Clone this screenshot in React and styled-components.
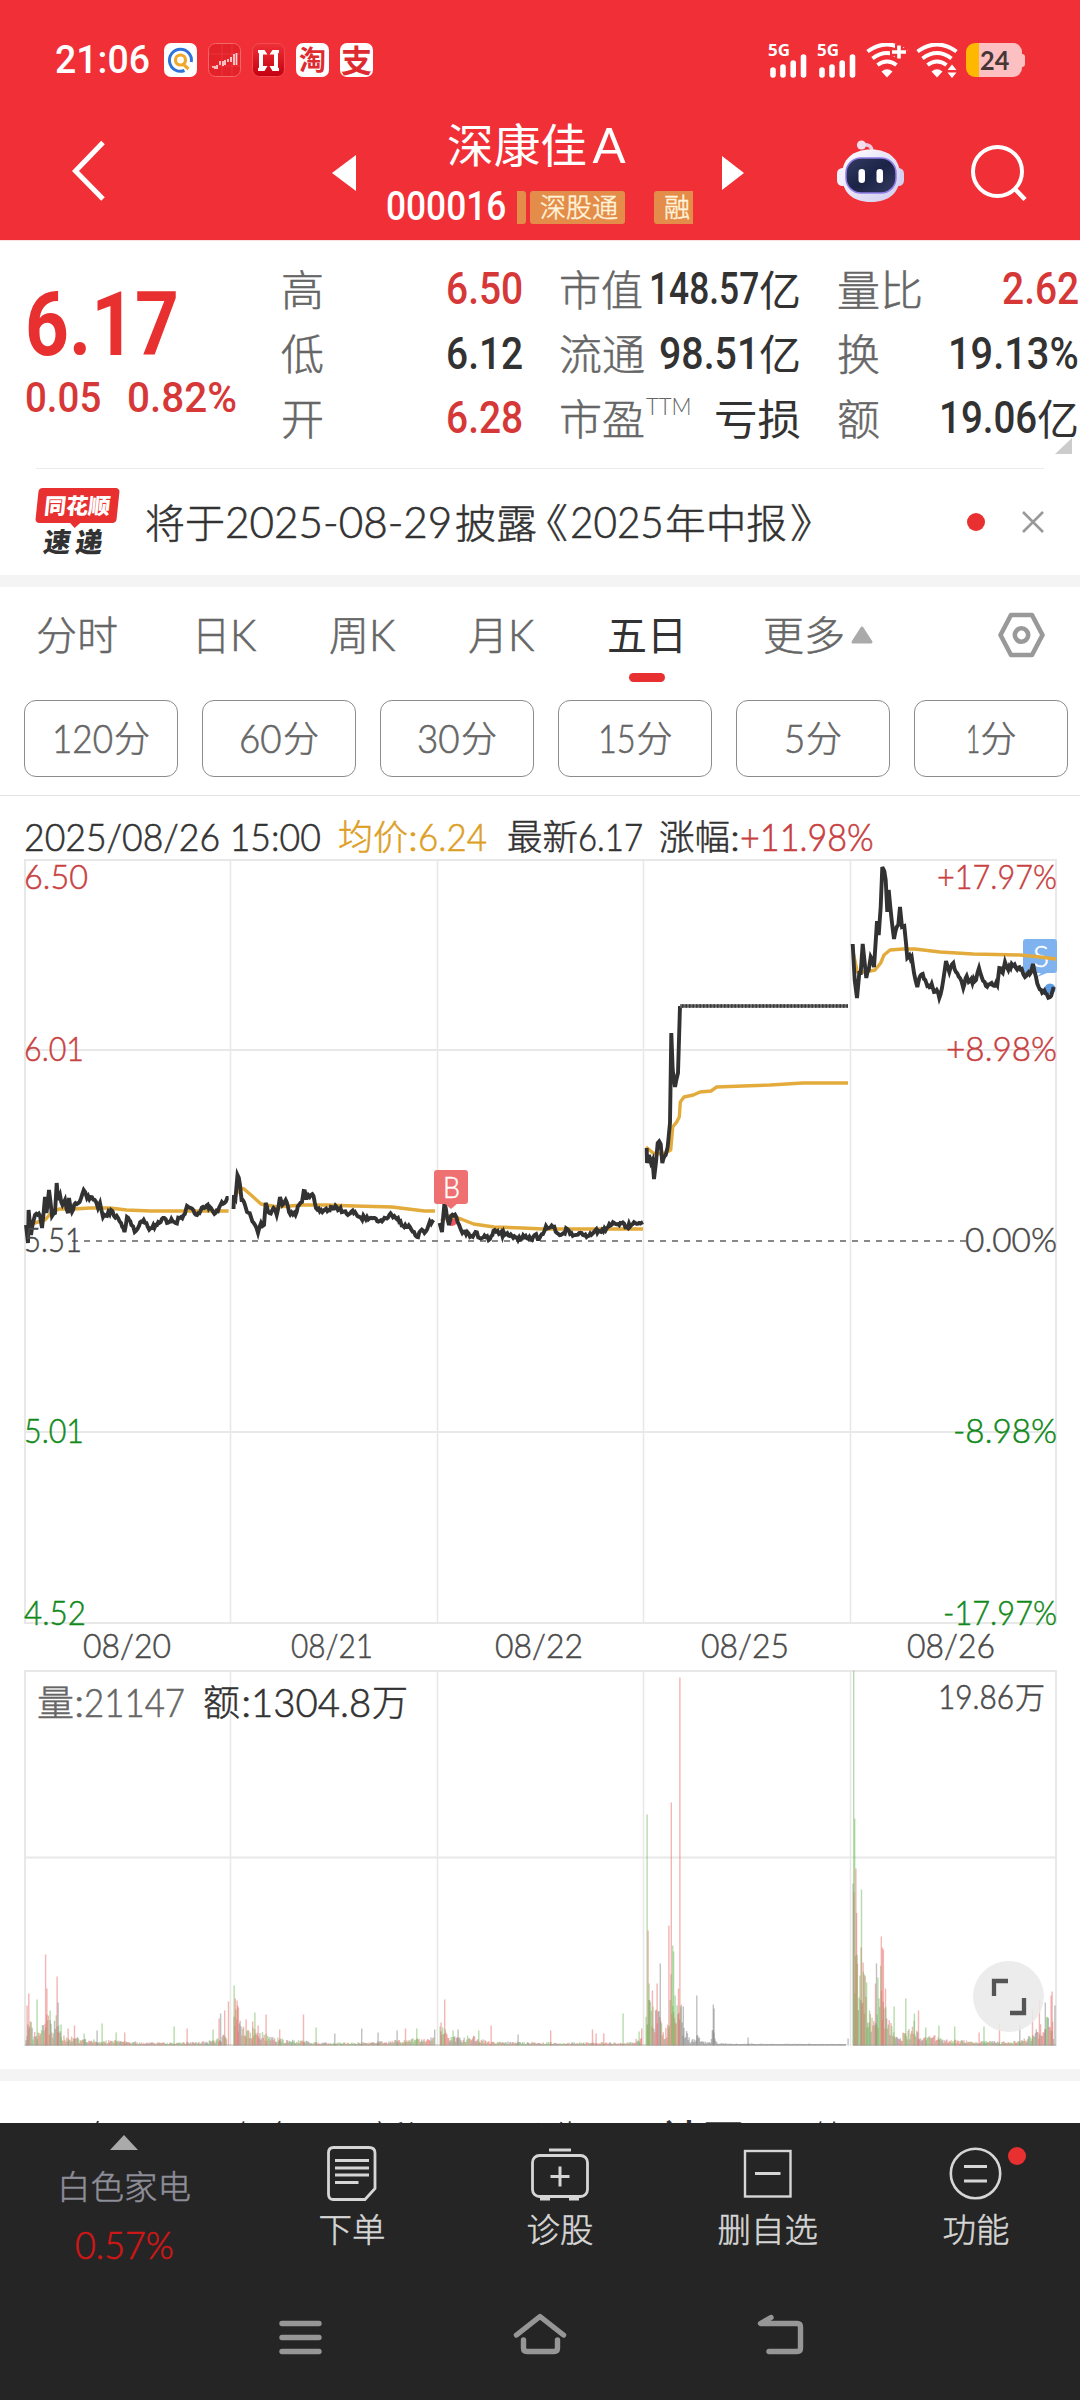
import React, { useLayoutEffect, useRef, useState } from "react";
import styled, { createGlobalStyle, css } from "styled-components";

const RED = "#e93030";
const SOFT_RED = "#d63838";
const INK = "#323232";
const GREY = "#666";

/* ---------- data ---------- */

const stats = [
  [
    { label: "高", lw: 43, num: "6.50", w: 77, color: SOFT_RED },
    { label: "低", lw: 43, num: "6.12", w: 77 },
    { label: "开", lw: 43, num: "6.28", w: 77, color: SOFT_RED },
  ],
  [
    { label: "市值", lw: 84, num: "148.57", w: 110, unit: "亿", uw: 42 },
    { label: "流通", lw: 86, num: "98.51", w: 100, unit: "亿", uw: 42 },
    { label: "市盈", lw: 86, sup: "TTM", unit: "亏损", uw: 87 },
  ],
  [
    { label: "量比", lw: 86, num: "2.62", w: 77, color: SOFT_RED },
    { label: "换", lw: 43, num: "19.13%", w: 131 },
    { label: "额", lw: 43, num: "19.06", w: 98, unit: "亿", uw: 42 },
  ],
];

const periods = [
  ["120", 61],
  ["60", 43],
  ["30", 43],
  ["15", 38],
  ["5", 21],
  ["1", 14],
];

const grid = [230.5, 437.5, 643.5, 850.5];

const days = [
  ["08/20", 84],
  ["08/21", 292],
  ["08/22", 496],
  ["08/25", 702],
  ["08/26", 908],
];

const prices = [
  "26,1225 28,1243 28.6,1210 31,1235 35,1215 40,1216 42,1228 45,1197 46.5,1213 49,1190 52,1216 55,1213 56.7,1183 58,1200 60,1195 62.5,1205 65,1200 68,1213 69,1198 72,1212 75.5,1203 79.6,1202 83.7,1190 87,1198 90.6,1197 94.7,1200 98,1208 100,1203 103,1217 107,1216 111,1210 114,1216 118,1218 121,1223 124.5,1232 127,1217 131.4,1225 134.7,1232 139,1226 143.7,1220 147.8,1227 152,1228 157,1225 163,1218 167,1223 171.4,1219 175.5,1223 179.6,1218 183.7,1215 187,1206 191,1208 197,1215 203,1207 210,1207 215.5,1213 220.4,1205 224.5,1203 228.6,1198",
  "233.5,1209 234,1195 235.5,1198 237.5,1175 240,1185 241.6,1200 245,1205 247,1212 251,1217 255,1225 258,1233 261,1223 264,1225 265.7,1203 269.4,1213 273.5,1208 276.7,1215 280,1197 282.4,1205 285.7,1200 289,1212 295.5,1215 299,1205 302,1202 303.7,1191 307,1198 311,1195 313.5,1196 316,1208 322.4,1212 328.6,1210 336.7,1207 343,1212 349,1214 355,1212 361,1218 367,1217 373.5,1218 379.6,1221 385.7,1218 391.8,1215 398,1218 404,1227 410,1227 414,1232 417,1237 420.4,1231 424.5,1233 428.6,1225 433.5,1220",
  "439.6,1223 442,1232 444.5,1203 447,1217 449,1225 451,1216 456.3,1217 459.2,1225 462.4,1233 467.3,1232 471.4,1236 475.5,1232 479.6,1238 485.7,1237 490,1239 494.7,1230 499,1234 506,1234 512,1236 518,1240 524.5,1237 530.6,1239 534.7,1235 539,1239 543,1234 546,1226 549,1228 553,1227 557,1233 562.4,1234 567.3,1229 571.4,1233 575.5,1235 581.6,1233 587.8,1236 594,1232 602,1230 608,1227 614.3,1223 620.4,1223 626.5,1227 632.7,1224 639,1223 643,1222",
  "646.7,1148 647,1163 649,1155 651,1163 652.5,1160 654,1179 656,1162 657.7,1143 660.7,1144 662.3,1163 665.7,1155 667.7,1147 670,1123 671.3,1033 672.7,1070 675,1087 678,1073 680,1006 680,1006",
  "852.7,944 854.7,980 857,998 859.3,973 860.7,973 862.7,944 864.7,963 866.3,978 868.7,970 870.7,957 874,967 876,937 877,921 878.7,935 880.7,907 882.3,867 884.3,871 885.7,880 887.3,912 888.7,890 890.3,907 892,923 894,939 896.7,927 898.3,925 900,907 902,927 904.3,926 906,943 907.3,958 911.7,957 914,973 917.3,987 919.3,978 922.7,974 925.3,980 927.3,986 931.7,984 934,992 936.7,990 939.3,998 942,988 946,961 949.3,972 953.3,963 956,972 960,978 963.3,988 966.7,976 968.7,982 976,980 979,968 981.7,977 986,986 992.7,985 997.3,985 999.3,968 1002.7,973 1005,962 1008.3,970 1011.7,964 1016,968 1021.7,969 1025,977 1030.7,973 1033,964 1036,977 1038.7,987 1043.3,992 1046.7,994 1050,997 1053.7,987",
];

const averages = [
  "30,1225 34.7,1223 45,1220 51,1213 59,1209 73.5,1209 90,1208 110,1208 126.5,1210 151,1211 228.6,1211",
  "234,1200 236,1195 240,1188 244,1189 251,1195 261,1204 277.5,1207 302,1205 326.5,1205 355,1206 392,1207 424.5,1211 435,1211",
  "441,1221 449,1216 461,1219 473.5,1224 494,1227 522.4,1228 543,1229 588,1229 643,1229",
  "646,1147 653,1153 662,1154 667,1152 670.7,1150 672.7,1127 676.7,1122 679.3,1117 680.3,1102 684,1097 693.3,1095 700,1092 711,1091 716.7,1087 743,1086 770,1085 803,1083 848,1083",
  "853.3,953 857.3,972 865,972 875,970 880.7,963 884,955 890,950 903,949 915,949 940,952 973,954 1020,955 1040,957 1056,959",
];

// per day: [x, typical height] envelope
const volumeShape = [
  [[26, 14], [30, 26], [34, 12], [44, 20], [48, 38], [52, 16], [57, 30], [62, 12], [80, 7], [100, 5], [125, 6], [140, 3], [180, 3], [215, 5], [227, 12]],
  [[234, 40], [238, 36], [242, 20], [258, 16], [270, 8], [300, 5], [320, 3], [370, 3], [400, 6], [434, 8]],
  [[440, 18], [445, 20], [450, 9], [475, 9], [490, 4], [560, 3], [630, 3], [642, 10]],
  [[646, 45], [650, 42], [656, 34], [660, 34], [664, 12], [668, 24], [672, 80], [675, 42], [680, 50], [684, 18], [690, 6], [695, 8], [697, 14], [702, 4], [711, 5], [713, 30], [715, 5], [722, 2], [846, 1.5]],
  [[853, 150], [856, 130], [858, 90], [864, 78], [868, 28], [873, 30], [876, 50], [878, 30], [881, 85], [885, 42], [890, 22], [900, 12], [907, 12], [914, 24], [918, 14], [922, 7], [935, 10], [942, 6], [1000, 4], [1020, 5], [1032, 10], [1040, 20], [1046, 30], [1051, 38], [1054, 10]],
];

const volumeSpikes = [
  [27, 40, "r"], [28.7, 52, "r"], [37, 46, "g"], [45.5, 91, "r"], [46.8, 57, "r"], [50, 35, "g"], [57, 69, "r"], [58, 43, "k"], [61, 21, "g"], [68, 17, "r"], [74.4, 20, "r"], [84, 12, "g"], [97, 15, "k"], [102, 22, "g"], [116, 13, "g"], [124.6, 13, "r"], [174, 19, "g"], [187, 17, "r"], [213, 16, "g"], [219, 27, "r"], [220.5, 32, "k"], [224.6, 35, "r"], [228.4, 44, "r"],
  [234, 60, "g"], [235.2, 47, "r"], [237, 45, "r"], [238.3, 38, "r"], [246, 26, "r"], [252.6, 24, "r"], [254.8, 33, "g"], [266, 31, "r"], [258, 20, "r"], [279.6, 16, "r"], [303.4, 31, "r"], [316, 18, "g"], [334.7, 12, "k"], [361.6, 17, "k"], [378, 13, "k"], [397, 15, "k"], [405.4, 17, "r"], [416.7, 17, "g"], [434.6, 16, "k"],
  [441, 23, "r"], [444.6, 46, "r"], [453, 15, "g"], [458, 16, "k"], [478.7, 15, "g"], [491, 20, "r"], [518, 11, "k"], [550.6, 15, "r"], [592.4, 16, "r"], [596, 12, "r"], [603.7, 12, "r"], [623, 32, "g"], [639, 14, "g"], [641.6, 17, "r"],
  [647, 231, "g"], [648, 115, "r"], [649, 62, "g"], [652.3, 55, "r"], [657, 62, "r"], [660.2, 82, "k"], [668.8, 120, "r"], [671.2, 243, "r"], [672.6, 100, "g"], [673.5, 94, "g"], [675, 50, "g"], [678.4, 57, "r"], [679.8, 368, "r"], [683.2, 39, "k"], [696.7, 50, "k"], [713.2, 41, "k"], [714, 37, "k"], [748, 8, "k"], [848, 7, "k"],
  [853.6, 375, "g"], [854.6, 227, "g"], [855.8, 177, "r"], [857, 91, "g"], [861, 98, "r"], [861.4, 156, "g"], [863, 83, "r"], [864.4, 71, "g"], [866.5, 63, "g"], [869.5, 35, "g"], [875.4, 62, "r"], [876.4, 82, "k"], [877.8, 68, "g"], [881.2, 109, "r"], [882.3, 98, "r"], [883.3, 96, "r"], [885.4, 57, "r"], [894, 39, "g"], [905.7, 47, "g"], [914.3, 32, "g"], [918.4, 35, "r"], [925.7, 18, "g"], [938.8, 20, "g"], [954.6, 19, "g"], [979, 13, "r"], [983.9, 19, "g"], [999.4, 22, "r"], [1019.7, 21, "k"], [1032.4, 36, "r"], [1039.3, 46, "r"], [1045.2, 43, "k"], [1051, 50, "r"], [1052, 54, "r"], [1054.8, 40, "k"],
];

const barColor = {
  r: "rgba(232,110,105,0.5)",
  g: "rgba(110,185,90,0.5)",
  k: "rgba(130,130,130,0.5)",
};

function makeRandom(seed) {
  let s = seed;
  return () => {
    s = (s * 16807) % 2147483647;
    return s / 2147483647;
  };
}

// adds minute-level noise between the key prices
function jitter(points, amount) {
  const rand = makeRandom(77);
  const list = points.split(" ").map((p) => p.split(",").map(Number));
  const out = [];
  list.forEach(([x, y], i) => {
    out.push([x, y]);
    const next = list[i + 1];
    if (!next || next[0] - x < 2.4) return;
    const steps = Math.floor((next[0] - x) / 1.1);
    for (let k = 1; k < steps; k++) {
      const t = k / steps;
      out.push([x + (next[0] - x) * t, y + (next[1] - y) * t + (rand() - 0.5) * amount]);
    }
  });
  return out.map(([x, y]) => `${x.toFixed(1)},${y.toFixed(1)}`).join(" ");
}

function makeVolume() {
  const rand = makeRandom(4242);
  const bars = [];
  volumeShape.forEach((shape, day) => {
    for (let x = shape[0][0]; x <= shape[shape.length - 1][0]; x += 0.86) {
      const i = Math.max(0, shape.findIndex((p) => p[0] > x) - 1);
      const a = shape[i];
      const b = shape[i + 1] || a;
      const t = b === a ? 0 : (x - a[0]) / (b[0] - a[0]);
      const top = a[1] + (b[1] - a[1]) * t;
      const h = Math.max(1.5, top * (0.35 + rand() * 0.75));
      const roll = rand();
      let kind = roll < 0.42 ? "r" : roll < 0.78 ? "g" : "k";
      if (day === 3 && x > 681) kind = "k";
      bars.push([x, h, kind]);
    }
  });
  return bars.concat(volumeSpikes);
}

const volume = makeVolume();

/* ---------- text helpers ---------- */

// Squeezes one run of text to an exact width, like the narrow numerals of the app
function Fit({ w, className, children }) {
  const ref = useRef(null);
  const [scale, setScale] = useState(1);

  useLayoutEffect(() => {
    setScale(w / ref.current.offsetWidth);
  }, [w, children]);

  return (
    <FitBox className={className} $w={w}>
      <FitInner ref={ref} style={{ transform: `scaleX(${scale})` }}>
        {children}
      </FitInner>
    </FitBox>
  );
}

const FitBox = styled.span`
  display: inline-block;
  flex: none;
  width: ${(p) => p.$w}px;
  white-space: nowrap;
`;

const FitInner = styled.span`
  display: inline-block;
  transform-origin: left center;
`;

const Cjk = styled(Fit)`
  padding-bottom: 3px;
  font-family: "Noto Sans CJK SC", sans-serif;
  font-size: ${(p) => p.size}px;
  font-weight: ${(p) => p.weight || 300};
  line-height: 1.2;
  margin-left: ${(p) => p.gap || 0}px;
  -webkit-text-stroke: ${(p) => (p.weight ? 0 : 0.5)}px currentColor;
`;

const Num = styled(Fit)`
  font-family: Lato, "Noto Sans", sans-serif;
  font-size: ${(p) => p.size}px;
  font-weight: ${(p) => p.weight || 300};
  line-height: 1.2;
  margin-left: ${(p) => p.gap || 0}px;
  -webkit-text-stroke: ${(p) => (p.weight ? 0 : 0.6)}px currentColor;
`;

const Din = styled(Num)`
  font-family: Roboto, "Liberation Sans", sans-serif;
  font-weight: ${(p) => p.weight || 500};
  -webkit-text-stroke: 0;
`;

/* ---------- header ---------- */

function StatusIcons() {
  return (
    <AppIcons>
      <svg width="33" height="34" viewBox="0 0 33 34">
        <rect width="33" height="34" rx="7" fill="#fff" />
        <path d="M20.5 27.5 A11 11 0 1 1 27.3 19" fill="none" stroke="#2f73d9" strokeWidth="3" />
        <circle cx="16.5" cy="17" r="5" fill="none" stroke="#efa92c" strokeWidth="3.2" />
        <path d="M19 21 L24.5 26" stroke="#efa92c" strokeWidth="3.2" />
      </svg>
      <svg width="33" height="34" viewBox="0 0 33 34">
        <rect x=".5" y=".5" width="32" height="33" rx="7" fill="#e42229" stroke="#f5666a" />
        <path d="M1 11h31M1 23h31M14 1v32M24 1v32" stroke="#ee4449" strokeWidth=".6" />
        <path d="M4 24h2M7 23v3M9 22v4M12 18v4M15 18v5M17 17v5M20 16v3M23 14v5M26 11v11M28.5 10v12" stroke="#ffd9d9" strokeWidth="1.7" />
      </svg>
      <svg width="33" height="34" viewBox="0 0 33 34">
        <defs>
          <linearGradient id="gate" x1="0" y1="0" x2="0" y2="1">
            <stop offset="0" stopColor="#ee3038" />
            <stop offset="1" stopColor="#c40010" />
          </linearGradient>
        </defs>
        <rect x=".5" y=".5" width="32" height="33" rx="7" fill="url(#gate)" stroke="#f04c52" />
        <path d="M6 7H12.5L15.500 11.500H11V23H15.500L12.500 28H6V25.500L7 24.500V10.500L6 9.500Z" fill="#fff" />
        <path d="M27 7H20.500L17.500 11.500H22V23H17.500L20.500 28H27V25.500L26 24.500V10.500L27 9.500Z" fill="#fff" />
      </svg>
      <Glyph>淘</Glyph>
      <Glyph $big>支</Glyph>
    </AppIcons>
  );
}

const Signal = () => (
  <svg width="39" height="35" viewBox="0 0 39 35">
    <text x="0" y="13" fontFamily="Open Sans" fontWeight="700" fontSize="16.500" textLength="22" lengthAdjust="spacingAndGlyphs" fill="#fff">5G</text>
    <path d="M5 27v5M15 24v8M25.200 20v12M35.500 14v18" stroke="#fff" strokeWidth="5.600" strokeLinecap="round" />
  </svg>
);

const Wifi = ({ children }) => (
  <svg width="42" height="35" viewBox="0 0 42 35">
    <path d="M1.500 8.500 Q21 -5.500 40.500 8.500" fill="none" stroke="#fff" strokeWidth="4" />
    <path d="M6.500 15.500 Q21 4.500 35.500 15.500" fill="none" stroke="#fff" strokeWidth="4" />
    <path d="M11.500 22 Q21 15 30.500 22" fill="none" stroke="#fff" strokeWidth="4" />
    <path d="M15.500 28.500 Q21 24 26.500 28.500 L21 34.500Z" fill="#fff" />
    {children}
  </svg>
);

function Robot() {
  return (
    <svg width="68" height="64" viewBox="0 0 68 64">
      <defs>
        <linearGradient id="shell" x1="0" y1="0" x2="1" y2="1">
          <stop offset="0" stopColor="#fff" />
          <stop offset=".5" stopColor="#e6e3f8" />
          <stop offset="1" stopColor="#cfcbee" />
        </linearGradient>
        <linearGradient id="visor" x1="0" y1="0" x2="1" y2="1">
          <stop offset="0" stopColor="#353c63" />
          <stop offset=".5" stopColor="#1b2346" />
          <stop offset="1" stopColor="#343b60" />
        </linearGradient>
      </defs>
      <path d="M24 5 Q35 3 35 12" fill="none" stroke="#eec9dc" strokeWidth="3.500" />
      <circle cx="24.500" cy="5" r="4.600" fill="#f3dcec" />
      <rect x="0" y="28" width="12" height="18" rx="5.500" fill="#f3f0fb" />
      <rect x="55" y="28" width="12" height="18" rx="5.500" fill="#d3d0f2" />
      <path d="M34 9.500 C53 9.500 63 20 63 35 C63 53 52 62 34 62 C16 62 5 53 5 35 C5 20 15 9.500 34 9.500Z" fill="url(#shell)" />
      <rect x="9" y="18" width="50" height="35" rx="15" fill="url(#visor)" stroke="#8f7ce6" strokeWidth="1.500" />
      <rect x="21.500" y="29" width="6.500" height="14" rx="3.200" fill="#fff" />
      <rect x="39.500" y="29" width="6.500" height="14" rx="3.200" fill="#fff" />
    </svg>
  );
}

function Header() {
  return (
    <HeaderStyled>
      <StatusBar>
        <Din w={95} size={39} weight={500}>21:06</Din>
        <StatusIcons />
        <StatusRight>
          <Signal />
          <Signal />
          <Wifi>
            <path d="M24 9h17M33 1v17" stroke="#f12f37" strokeWidth="8" />
            <path d="M26 9h14M33 2.500v13" stroke="#fff" strokeWidth="3.600" />
          </Wifi>
          <Wifi>
            <path d="M30 28h12M36 22v13" stroke="#f12f37" strokeWidth="3" />
            <path d="M36 21.500l4.500 5.500h-9zM36 35l4.500-5.500h-9z" fill="#fff" />
          </Wifi>
          <Battery>
            <Num w={29} size={27} weight={700}>24</Num>
          </Battery>
        </StatusRight>
      </StatusBar>
      <TitleBar>
        <BackIcon width="34" height="62" viewBox="0 0 34 62">
          <path d="M31 2.500 L3.500 31 L31 59" fill="none" stroke="#fff" strokeWidth="5" />
        </BackIcon>
        <PrevIcon width="24" height="36" viewBox="0 0 24 36">
          <path d="M24 0v36L0 18z" fill="#fff" />
        </PrevIcon>
        <TitleBox>
          <Title>
            <Cjk w={140} size={46} weight={400}>深康佳</Cjk>
            <Num w={33} size={49} gap={6} weight={400}>A</Num>
          </Title>
          <CodeRow>
            <Din w={120} size={40} weight={500}>000016</Din>
            <TagEdge />
            <Tag $w={95}>
              <Cjk w={78} size={26}>深股通</Cjk>
            </Tag>
            <Tag $w={39} $gap={29} $cut>
              <Cjk w={26} size={26}>融</Cjk>
            </Tag>
          </CodeRow>
        </TitleBox>
        <NextIcon width="22" height="34" viewBox="0 0 22 34">
          <path d="M0 0v34l22-17z" fill="#fff" />
        </NextIcon>
        <RobotSlot>
          <Robot />
        </RobotSlot>
        <SearchIcon width="58" height="58" viewBox="0 0 58 58">
          <circle cx="27.500" cy="27.500" r="24.500" fill="none" stroke="#fff" strokeWidth="4" />
          <path d="M44.500 44.500 L55 55.500" stroke="#fff" strokeWidth="4.500" />
        </SearchIcon>
      </TitleBar>
    </HeaderStyled>
  );
}

const HeaderStyled = styled.header`
  flex: none;
  height: 240px;
  background: #f12f37;
  color: #fff;
`;

const StatusBar = styled.div`
  display: flex;
  align-items: center;
  height: 120px;
  padding: 0 58px 0 55px;
`;

const AppIcons = styled.div`
  display: flex;
  gap: 11px;
  margin-left: 14px;
`;

const Glyph = styled.span`
  width: 33px;
  height: 34px;
  border-radius: 7px;
  background: #fff;
  color: #dd2b30;
  font: 700 ${(p) => (p.$big ? 31 : 27)}px/32px "Noto Sans CJK SC", sans-serif;
  text-align: center;
`;

const StatusRight = styled.div`
  display: flex;
  align-items: center;
  gap: 10px;
  margin-left: auto;

  svg:nth-of-type(4) { margin-left: -2px; }
`;

const Battery = styled.div`
  position: relative;
  display: flex;
  align-items: center;
  justify-content: center;
  width: 56px;
  height: 34px;
  margin-left: -2px;
  border-radius: 9px;
  background: linear-gradient(90deg, #ffb800 13px, #fcc0c3 13px);
  color: #473636;

  &::after {
    content: "";
    position: absolute;
    right: -3px;
    top: 11px;
    width: 3px;
    height: 13px;
    border-radius: 0 3px 3px 0;
    background: #fcc0c3;
  }
`;

const TitleBar = styled.div`
  display: flex;
  align-items: flex-start;
  height: 120px;
  padding-left: 72px;
`;

const BackIcon = styled.svg`
  margin-top: 20px;
`;

const PrevIcon = styled.svg`
  margin: 35px 0 0 226px;
`;

const NextIcon = styled.svg`
  margin: 36px 0 0 29px;
`;

const RobotSlot = styled.div`
  margin: 20px 0 0 93px;
`;

const SearchIcon = styled.svg`
  margin: 24px 0 0 65px;
`;

const TitleBox = styled.div`
  width: 305px;
  margin-left: 32px;
`;

const Title = styled.div`
  display: flex;
  align-items: center;
  justify-content: center;
  height: 48px;
  padding-right: 9px;
`;

const CodeRow = styled.div`
  display: flex;
  align-items: center;
  height: 34px;
  margin-top: 22px;
  margin-left: -2px;
`;

const TagEdge = styled.i`
  width: 9px;
  height: 33px;
  margin: 0 4px 0 11px;
  border-radius: 0 3px 3px 0;
  background: #e48d4b;
`;

const Tag = styled.span`
  display: flex;
  align-items: center;
  width: ${(p) => p.$w}px;
  height: 33px;
  padding-left: 10px;
  margin-left: ${(p) => p.$gap || 0}px;
  border-radius: ${(p) => (p.$cut ? "3px 0 0 3px" : "3px")};
  background: #e48d4b;
  color: #fff3d9;
`;

/* ---------- quote ---------- */

function Quote() {
  return (
    <QuoteStyled>
      <PriceBox>
        <Din w={154} size={89} weight={700}>6.17</Din>
        <Change>
          <Din w={76} size={43}>0.05</Din>
          <Din w={110} size={43}>0.82%</Din>
        </Change>
      </PriceBox>
      {stats.map((group, i) => (
        <StatGroup key={i}>
          {group.map((s) => (
            <Stat key={s.label}>
              <StatLabel>
                <Cjk w={s.lw} size={42}>{s.label}</Cjk>
                {s.sup && <Sup><Num w={46} size={23} weight={300}>{s.sup}</Num></Sup>}
              </StatLabel>
              <StatValue $color={s.color}>
                {s.num && <Din w={s.w} size={44}>{s.num}</Din>}
                {s.unit && <Cjk w={s.uw} size={42} weight={400}>{s.unit}</Cjk>}
              </StatValue>
            </Stat>
          ))}
        </StatGroup>
      ))}
      <Corner />
    </QuoteStyled>
  );
}

const QuoteStyled = styled.section`
  position: relative;
  flex: none;
  display: flex;
  height: 228px;
  border-top: 1px solid #fde0e2;
`;

const PriceBox = styled.div`
  width: 281px;
  padding: 31px 0 0 25px;
  color: ${RED};
`;

const Change = styled.div`
  display: flex;
  gap: 26px;
  margin-top: -7px;
  color: ${SOFT_RED};
`;

const StatGroup = styled.div`
  width: 242px;
  margin-right: 36px;
  padding-top: 16px;

  &:nth-of-type(4) { margin-right: 0; }
`;

const Stat = styled.div`
  display: flex;
  align-items: center;
  justify-content: space-between;
  height: 64.700px;
`;

const StatLabel = styled.div`
  display: flex;
  color: ${GREY};
`;

const Sup = styled.sup`
  display: flex;
  margin: 1px 0 0 1px;
  line-height: 1;
`;

const StatValue = styled.div`
  display: flex;
  align-items: center;
  color: ${(p) => p.$color || INK};
`;

const Corner = styled.i`
  position: absolute;
  left: 1055px;
  top: 197px;
  width: 17px;
  height: 16px;
  background: #ccc;
  clip-path: polygon(100% 0, 100% 100%, 0 100%);
`;

/* ---------- news ---------- */

function News() {
  return (
    <NewsStyled>
      <Badge>
        <BadgeTop>同花顺</BadgeTop>
        <BadgeBottom>速递</BadgeBottom>
      </Badge>
      <Headline>
        <Cjk w={80} size={40}>将于</Cjk>
        <Num w={227} size={43}>2025-08-29</Num>
        <Cjk w={82} size={40} gap={3}>披露</Cjk>
        <Bracket w={22} size={40} gap={9}>《</Bracket>
        <Num w={94} size={43} gap={2}>2025</Num>
        <Cjk w={122} size={40} gap={1}>年中报</Cjk>
        <Bracket w={22} size={40} gap={3}>》</Bracket>
      </Headline>
      <Dot />
      <svg width="22" height="22" viewBox="0 0 22 22">
        <path d="M1 1l20 20M21 1L1 21" stroke="#999" strokeWidth="2.600" />
      </svg>
    </NewsStyled>
  );
}

const NewsStyled = styled.section`
  flex: none;
  display: flex;
  align-items: center;
  height: 107px;
  margin: 0 36px;
  border-top: 1px solid #ebebeb;
`;

const Badge = styled.div`
  width: 83px;
  height: 69px;
  padding: 0 1px;
`;

const BadgeTop = styled.div`
  position: relative;
  height: 35px;
  background: ${RED};
  border-radius: 4px;
  transform: skewX(-6deg);
  color: #fff;
  font: 900 22px/32px "Noto Sans CJK SC", sans-serif;
  text-align: center;

  &::after {
    content: "";
    position: absolute;
    left: 34px;
    bottom: -5px;
    border: 6px solid transparent;
    border-top-color: ${RED};
    border-bottom: 0;
  }
`;

const BadgeBottom = styled.div`
  margin-top: 3px;
  padding-left: 7px;
  transform: skewX(-8deg);
  color: ${INK};
  font: 900 27px/29px "Noto Sans CJK SC", sans-serif;
  letter-spacing: 5px;
`;

const Headline = styled.div`
  display: flex;
  align-items: center;
  margin-left: 26px;
  color: ${INK};
`;

const Bracket = styled(Cjk)`
  font-feature-settings: "halt";
`;

const Dot = styled.i`
  width: 18px;
  height: 18px;
  margin-left: auto;
  margin-right: 37px;
  border-radius: 50%;
  background: ${RED};
`;

const Band = styled.div`
  flex: none;
  height: 12px;
  background: #f4f4f4;
`;

/* ---------- tabs ---------- */

function Tabs() {
  return (
    <TabsStyled>
      <TabRow>
        <Tab $x={0}><Cjk w={82} size={40}>分时</Cjk></Tab>
        <Tab $x={74}><Cjk w={38} size={40}>日</Cjk><Num w={26} size={43}>K</Num></Tab>
        <Tab $x={73}><Cjk w={40} size={40}>周</Cjk><Num w={26} size={43}>K</Num></Tab>
        <Tab $x={73}><Cjk w={40} size={40}>月</Cjk><Num w={26} size={43}>K</Num></Tab>
        <Tab $x={73} $active><Cjk w={80} size={40} weight={400}>五日</Cjk></Tab>
        <Tab $x={76}>
          <Cjk w={82} size={40}>更多</Cjk>
          <MoreIcon width="22" height="18" viewBox="0 0 22 18">
            <path d="M11 2 L20 16 H2Z" fill="#aaa" stroke="#aaa" strokeWidth="3" strokeLinejoin="round" />
          </MoreIcon>
        </Tab>
        <GearIcon width="47" height="46" viewBox="0 0 47 46">
          <path d="M13 3 H34 L44.500 23 L34 43 H13 L2.500 23Z" fill="none" stroke="#999" strokeWidth="4.600" strokeLinejoin="round" />
          <circle cx="23.500" cy="23" r="6.700" fill="none" stroke="#999" strokeWidth="4.600" />
        </GearIcon>
      </TabRow>
      <PeriodRow>
        {periods.map(([n, w]) => (
          <Period key={n}>
            <Num w={w} size={38.500}>{n}</Num>
            <Cjk w={36} size={36} gap={1}>分</Cjk>
          </Period>
        ))}
      </PeriodRow>
    </TabsStyled>
  );
}

const TabsStyled = styled.section`
  flex: none;
  height: 209px;
  border-bottom: 1px solid #e4e4e4;
`;

const TabRow = styled.div`
  display: flex;
  align-items: center;
  height: 95px;
  padding-left: 36px;
`;

const Tab = styled.div`
  position: relative;
  display: flex;
  align-items: center;
  height: 95px;
  margin-left: ${(p) => p.$x}px;
  color: ${(p) => (p.$active ? INK : GREY)};

  ${(p) =>
    p.$active &&
    css`
      &::after {
        content: "";
        position: absolute;
        left: 22px;
        bottom: 0;
        width: 36px;
        height: 9px;
        border-radius: 5px;
        background: ${RED};
      }
    `}
`;

const MoreIcon = styled.svg`
  margin-left: 6px;
`;

const GearIcon = styled.svg`
  margin-left: auto;
  margin-right: 35px;
`;

const PeriodRow = styled.div`
  display: flex;
  gap: 24px;
  padding: 18px 0 0 24px;
`;

const Period = styled.div`
  flex: none;
  display: flex;
  align-items: center;
  justify-content: center;
  width: 154px;
  height: 77px;
  border: 1px solid #8c8c8c;
  border-radius: 12px;
  color: ${GREY};
`;

/* ---------- charts ---------- */

const Info = styled.div`
  flex: none;
  display: flex;
  align-items: center;
  height: 46px;
  margin-top: 17px;
  padding-left: 24px;
  color: ${INK};
`;

const Avg = styled.span`
  display: flex;
  align-items: center;
  margin: 0 20px 0 17px;
  color: #dd9f26;
`;

const Rise = styled.span`
  display: flex;
  color: #c8403f;
`;

const AxisText = ({ x, y, w, color, size = 33.5, end, children }) => (
  <text
    x={x}
    y={y}
    fill={color}
    stroke={color}
    strokeWidth=".5"
    fontSize={size}
    fontWeight="300"
    fontFamily="Lato, 'Noto Sans', sans-serif"
    textAnchor={end ? "end" : "start"}
    textLength={w}
    lengthAdjust="spacingAndGlyphs"
  >
    {children}
  </text>
);

function PriceChart() {
  return (
    <ChartSvg width="1080" height="805" viewBox="0 859 1080 805">
      <g stroke="#e8e8e8" strokeWidth="2" fill="none">
        <path d="M25 860V1623H1056V860Z" />
        <path d="M25 1050H1056M25 1432H1056" />
        {grid.map((x) => <path key={x} d={`M${x} 860V1623`} strokeWidth="1.500" />)}
      </g>
      <path d="M72 1241H966" stroke="#888" strokeWidth="1.800" strokeDasharray="6 6" />

      {/* trade markers */}
      <path d="M1037 977 L1047 973 L1041 973Z" fill="#7fb3f0" />
      <rect x="1023" y="939" width="34" height="34" rx="3" fill="#7fb3f0" />
      <AxisText x={1033} y={967} w={16} size={30} color="#fff">S</AxisText>
      <circle cx="1050" cy="989" r="5.500" fill="#5c9be6" />
      <circle cx="452" cy="1221" r="5" fill="#ee5560" />

      {averages.map((a) => (
        <polyline key={a} points={a} fill="none" stroke="#e3ab3c" strokeWidth="3.400" strokeLinejoin="round" />
      ))}
      {prices.map((p) => (
        <polyline key={p} points={jitter(p, 4.5)} fill="none" stroke="#323232" strokeWidth="3.900" />
      ))}
      <path d="M680 1006H848" stroke="#666" strokeWidth="3.600" />
      <path d="M682 1006H848" stroke="#3a3a3a" strokeWidth="3.600" strokeDasharray="1.500 2" />

      <path d="M444 1203 L451 1209 L458 1203Z" fill="#ee7070" />
      <rect x="434" y="1170" width="34" height="34" rx="3" fill="#ee7070" />
      <AxisText x={443} y={1198} w={17} size={29} color="#fff">B</AxisText>

      <AxisText x={24} y={889} w={64} color="#c8403f">6.50</AxisText>
      <AxisText x={24} y={1061} w={60} color="#c8403f">6.01</AxisText>
      <AxisText x={24} y={1252} w={58} color="#4a4a4a">5.51</AxisText>
      <AxisText x={24} y={1443} w={60} color="#11891a">5.01</AxisText>
      <AxisText x={24} y={1625} w={62} color="#11891a">4.52</AxisText>
      <AxisText x={1057} y={889} w={120} end color="#c8403f">+17.97%</AxisText>
      <AxisText x={1057} y={1061} w={111} end color="#c8403f">+8.98%</AxisText>
      <AxisText x={1057} y={1252} w={92} end color="#4a4a4a">0.00%</AxisText>
      <AxisText x={1057} y={1443} w={104} end color="#11891a">-8.98%</AxisText>
      <AxisText x={1057} y={1625} w={114} end color="#11891a">-17.97%</AxisText>
      {days.map(([d, x]) => (
        <AxisText key={d} x={x - 1} y={1658} w={d === "08/21" ? 82 : 88} color="#4a4a4a">{d}</AxisText>
      ))}
    </ChartSvg>
  );
}

function VolumeChart() {
  return (
    <VolumeBox>
      <ChartSvg width="1080" height="405" viewBox="0 1664 1080 405">
        <g stroke="#e8e8e8" strokeWidth="2" fill="none">
          <path d="M25 2046V1671H1056V2046" />
          <path d="M25 1857.500H1056" />
          {grid.map((x) => <path key={x} d={`M${x} 1671V2046`} strokeWidth="1.500" />)}
        </g>
        {volume.map(([x, h, k], i) => (
          <rect key={i} x={x - 0.6} y={2045.5 - h} width="1.400" height={h} fill={barColor[k]} />
        ))}
        <path d="M25 2045H846M853 2045H1056" stroke="#999" strokeWidth="1.200" opacity=".7" />
      </ChartSvg>
      <VolumeInfo>
        <GreyText>
          <Cjk w={37} size={36}>量</Cjk>
          <Num w={10} size={39}>:</Num>
          <Num w={101} size={39}>21147</Num>
        </GreyText>
        <Cjk w={37} size={36}>额</Cjk>
        <Num w={10} size={39} gap={1}>:</Num>
        <Num w={120} size={39}>1304.8</Num>
        <Cjk w={36} size={36} gap={1}>万</Cjk>
      </VolumeInfo>
      <VolumeMax>
        <Num w={76} size={32.500}>19.86</Num>
        <Cjk w={30} size={30} gap={1}>万</Cjk>
      </VolumeMax>
      <Expand>
        <svg width="36" height="38" viewBox="0 0 36 38">
          <path d="M3 18V3H17M33 20V35H19" fill="none" stroke="#555" strokeWidth="4.300" />
        </svg>
      </Expand>
    </VolumeBox>
  );
}

const ChartSvg = styled.svg`
  flex: none;
  display: block;
`;

const VolumeBox = styled.div`
  position: relative;
  flex: none;
  height: 405px;
`;

const VolumeInfo = styled.div`
  position: absolute;
  left: 37px;
  top: 15px;
  display: flex;
  align-items: center;
  color: ${INK};
`;

const GreyText = styled.span`
  display: flex;
  align-items: center;
  margin-right: 18px;
  color: ${GREY};
`;

const VolumeMax = styled.div`
  position: absolute;
  right: 35px;
  top: 13px;
  display: flex;
  align-items: center;
  color: #4a4a4a;
`;

const Expand = styled.div`
  position: absolute;
  left: 973px;
  top: 297px;
  display: grid;
  place-items: center;
  width: 71px;
  height: 71px;
  border-radius: 50%;
  background: rgba(233, 233, 233, 0.88);
`;

/* ---------- bottom ---------- */

const Peek = styled.div`
  flex: none;
  display: flex;
  height: 42px;
  padding: 37px 0 0 80px;
  overflow: hidden;
  color: ${INK};
  font: 300 36px/1 "Noto Sans CJK SC", sans-serif;

  span { flex: none; width: 145px; }
  b { flex: none; width: 152px; font-weight: 500; font-size: 42px; margin-top: -1px; }
`;

function BottomBar() {
  return (
    <BottomStyled>
      <Sector>
        <svg width="28" height="15" viewBox="0 0 28 15">
          <path d="M14 0L28 15H0z" fill="#aaa" />
        </svg>
        <Cjk w={134} size={33.500}>白色家电</Cjk>
        <SectorRise>
          <Num w={99} size={37}>0.57%</Num>
        </SectorRise>
      </Sector>
      <Action>
        <svg width="60" height="60" viewBox="0 0 60 60">
          <path d="M11.500 3.500 H47 Q53 3.500 53 9 V44.500 L43 55.500 H11.500 Q6.500 55.500 6.500 50 V9 Q6.500 3.500 11.500 3.500Z" fill="none" stroke="#d6d6d6" strokeWidth="2.800" />
          <path d="M13 16.500H47M13 24H47M13 31H47M13 38.500H36.500" stroke="#d6d6d6" strokeWidth="3" />
        </svg>
        <Cjk w={67} size={33.500}>下单</Cjk>
      </Action>
      <Action>
        <svg width="60" height="60" viewBox="0 0 60 60">
          <path d="M19 6H41" stroke="#d6d6d6" strokeWidth="3" />
          <rect x="2.500" y="11.500" width="55" height="41" rx="7" fill="none" stroke="#d6d6d6" strokeWidth="2.800" />
          <path d="M30 22.500V42.500M20.500 32.500H39.500M10 55H20M39 55H49" stroke="#d6d6d6" strokeWidth="3" />
        </svg>
        <Cjk w={67} size={33.500}>诊股</Cjk>
      </Action>
      <Action>
        <svg width="60" height="60" viewBox="0 0 60 60">
          <rect x="7" y="7" width="45.500" height="45.500" fill="none" stroke="#d6d6d6" strokeWidth="2.400" />
          <path d="M17 29.500H42.500" stroke="#d6d6d6" strokeWidth="3" />
        </svg>
        <Cjk w={101} size={33.500}>删自选</Cjk>
      </Action>
      <Action>
        <svg width="60" height="60" viewBox="0 0 60 60">
          <circle cx="29.500" cy="29.500" r="24.700" fill="none" stroke="#d6d6d6" strokeWidth="2.600" />
          <path d="M18 22.500H41M18 37H41" stroke="#d6d6d6" strokeWidth="3" />
        </svg>
        <Cjk w={67} size={33.500}>功能</Cjk>
        <NewDot />
      </Action>
    </BottomStyled>
  );
}

const BottomStyled = styled.nav`
  flex: none;
  display: flex;
  height: 169px;
  background: #252525;
`;

const Sector = styled.div`
  display: flex;
  flex-direction: column;
  align-items: center;
  width: 248px;
  padding-top: 12px;
  color: #8e8e98;

  ${Cjk} { margin-top: 15px; }
`;

const SectorRise = styled.div`
  margin-top: 15px;
  color: #cf1717;
`;

const Action = styled.div`
  position: relative;
  display: flex;
  flex-direction: column;
  align-items: center;
  width: 208px;
  padding-top: 21px;
  color: #d6d6d6;

  ${Cjk} { margin-top: 4px; }
`;

const NewDot = styled.i`
  position: absolute;
  left: 136px;
  top: 24px;
  width: 18px;
  height: 18px;
  border-radius: 50%;
  background: ${RED};
`;

const SystemNav = styled.div`
  flex: none;
  display: flex;
  align-items: flex-start;
  gap: 180px;
  height: 108px;
  padding: 20px 0 0 270px;
  background: #252525;

  svg { fill: none; stroke: #969696; stroke-width: 5.400; stroke-linecap: round; stroke-linejoin: round; }
`;

export default function App() {
  return (
    <Page>
      <GlobalStyle />
      <Header />
      <Quote />
      <News />
      <Band />
      <Tabs />
      <Info>
        <Num w={297} size={37.500}>2025/08/26 15:00</Num>
        <Avg>
          <Cjk w={70} size={35}>均价</Cjk>
          <Num w={10} size={37.500}>:</Num>
          <Num w={69} size={37.500}>6.24</Num>
        </Avg>
        <Cjk w={71} size={35}>最新</Cjk>
        <Num w={65} size={37.500}>6.17</Num>
        <Cjk w={71} size={35} gap={16}>涨幅</Cjk>
        <Num w={10} size={37.500}>:</Num>
        <Rise>
          <Num w={134} size={37.500}>+11.98%</Num>
        </Rise>
      </Info>
      <PriceChart />
      <VolumeChart />
      <Band />
      <Peek>
        <span>盘口</span>
        <span>资金</span>
        <span>新闻</span>
        <span>公告</span>
        <b>社区</b>
        <span>简况</span>
      </Peek>
      <BottomBar />
      <SystemNav>
        <svg width="60" height="50" viewBox="0 0 60 50">
          <path d="M12 11.500H49M12 25.500H49M12 39.500H49" />
        </svg>
        <svg width="60" height="50" viewBox="0 0 60 50">
          <path d="M6.500 23L30 4.500L53.500 23M13.500 28V36Q13.500 39.500 17 39.500H44Q47.500 39.500 47.500 36V28" />
        </svg>
        <svg width="60" height="50" viewBox="0 0 60 50">
          <path d="M21 5.500L10.500 11.500H47Q50.500 11.500 50.500 15V36Q50.500 39.500 47 39.500H19" />
        </svg>
      </SystemNav>
    </Page>
  );
}

const GlobalStyle = createGlobalStyle`
  * { box-sizing: border-box; }
  body { margin: 0; background: #fff; }
  svg { display: block; flex: none; }
`;

const Page = styled.main`
  display: flex;
  flex-direction: column;
  width: 1080px;
  height: 2400px;
  overflow: hidden;
  background: #fff;
  font-family: Lato, "Noto Sans CJK SC", sans-serif;
`;
